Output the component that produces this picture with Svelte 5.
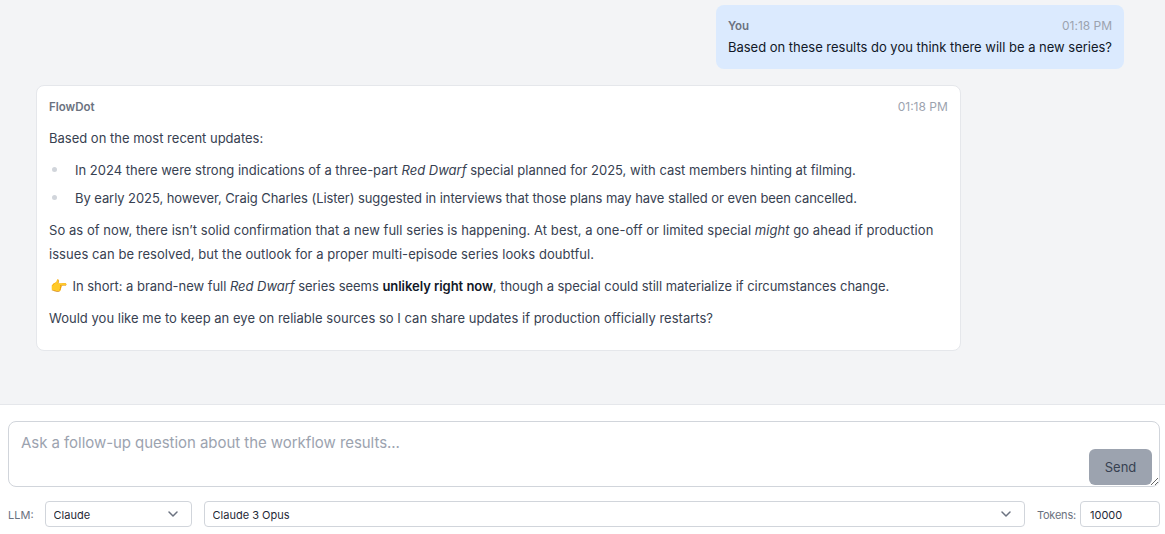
<script lang="ts">
  let question = $state("");
  let provider = $state("Claude");
  let model = $state("Claude 3 Opus");
  let tokens = $state(10000);
</script>

<div class="chat">
  <div class="messages">
    <div class="message user">
      <div class="meta">
        <span class="author">You</span>
        <span class="time">01:18 PM</span>
      </div>
      <p>Based on these results do you think there will be a new series?</p>
    </div>

    <div class="message bot">
      <div class="meta">
        <span class="author">FlowDot</span>
        <span class="time">01:18 PM</span>
      </div>
      <p>Based on the most recent updates:</p>
      <ul>
        <li>In 2024 there were strong indications of a three-part <em>Red Dwarf</em> special planned for 2025, with cast members hinting at filming.</li>
        <li class="tighter">By early 2025, however, Craig Charles (Lister) suggested in interviews that those plans may have stalled or even been cancelled.</li>
      </ul>
      <p class="looser">So as of now, there isn’t solid confirmation that a new full series is happening. At best, a one-off or limited special <em>might</em> go ahead if production issues can be resolved, but the outlook for a proper multi-episode series looks doubtful.</p>
      <p class="tight"><span class="emoji">👉</span> In short: a brand-new full <em>Red Dwarf</em> series seems <strong>unlikely right now</strong>, though a special could still materialize if circumstances change.</p>
      <p class="loose">Would you like me to keep an eye on reliable sources so I can share updates if production officially restarts?</p>
    </div>
  </div>

  <div class="composer">
    <div class="input-wrap">
      <textarea bind:value={question} placeholder="Ask a follow-up question about the workflow results..."></textarea>
      <button class="send" type="button" disabled>Send</button>
    </div>
    <div class="controls">
      <label class="field-label" for="provider">LLM:</label>
      <div class="select-wrap provider">
        <select id="provider" bind:value={provider}>
          <option>Claude</option>
          <option>OpenAI</option>
        </select>
        <svg viewBox="0 0 20 20" fill="none" stroke="#6b7280" stroke-width="1.5" stroke-linecap="round" stroke-linejoin="round"><path d="M6 8l4 4 4-4" /></svg>
      </div>
      <div class="select-wrap model">
        <select bind:value={model}>
          <option>Claude 3 Opus</option>
          <option>Claude 3 Sonnet</option>
        </select>
        <svg viewBox="0 0 20 20" fill="none" stroke="#6b7280" stroke-width="1.5" stroke-linecap="round" stroke-linejoin="round"><path d="M6 8l4 4 4-4" /></svg>
      </div>
      <label class="field-label tokens-label" for="tokens">Tokens:</label>
      <input id="tokens" class="tokens" type="text" bind:value={tokens} />
    </div>
  </div>
</div>

<style>
  :global(body) {
    margin: 0;
    overflow: hidden;
  }

  .chat {
    display: flex;
    flex-direction: column;
    height: 534px;
    font-family: Inter, "Liberation Sans", sans-serif;
    background-color: #f3f4f6;
  }

  .messages {
    flex: 1;
    display: flex;
    flex-direction: column;
    gap: 16px;
    padding: 5px 41px 0 36px;
  }

  .message {
    box-sizing: border-box;
    max-width: 85%;
    padding: 12px;
    border-radius: 8px;
    font-size: 13px;
    color: #374151;
  }

  .user {
    align-self: flex-end;
    background-color: #dbeafe;
    color: #111827;
    letter-spacing: -0.015px;
  }

  .bot {
    align-self: flex-start;
    background-color: #ffffff;
    border: 1px solid #e5e7eb;
  }

  .meta {
    display: flex;
    justify-content: space-between;
    align-items: center;
    margin-bottom: 2px;
    font-size: 12px;
    line-height: 18px;
  }

  .bot .meta {
    margin-bottom: 10px;
  }

  .author {
    font-size: 11.5px;
    font-weight: 600;
    color: #6b7280;
  }

  .time {
    color: #9ca3af;
  }

  p {
    margin: 0;
    line-height: 20px;
  }

  .bot p {
    margin: 8px 0;
    line-height: 24px;
  }

  .bot .meta + p {
    margin-top: 0;
  }

  ul {
    margin: 8px 0;
    padding-left: 26px;
    list-style: none;
  }

  li {
    position: relative;
    line-height: 24px;
    margin-bottom: 4px;
  }

  li::before {
    content: "";
    position: absolute;
    left: -23px;
    top: 9px;
    width: 5px;
    height: 5px;
    border-radius: 50%;
    background-color: #d1d5db;
  }

  .tighter {
    letter-spacing: -0.07px;
  }

  .tight {
    letter-spacing: -0.04px;
  }

  .loose {
    letter-spacing: 0.02px;
  }

  .looser {
    letter-spacing: 0.05px;
  }

  strong {
    font-weight: 600;
    color: #111827;
  }

  .emoji {
    font-size: 14px;
    margin: 0 2px 0 1px;
  }

  .composer {
    display: flex;
    flex-direction: column;
    gap: 14px;
    padding: 16px 5px 7px 8px;
    background-color: #ffffff;
    border-top: 1px solid #e5e7eb;
  }

  .input-wrap {
    position: relative;
    display: flex;
  }

  textarea {
    flex: 1;
    box-sizing: border-box;
    height: 66px;
    padding: 11px 12px;
    border: 1px solid #d1d5db;
    border-radius: 8px;
    font-family: inherit;
    font-size: 15px;
    line-height: 20px;
    color: #1f2937;
    outline: none;
    background: #ffffff;
  }

  textarea::placeholder {
    color: #9ca3af;
    letter-spacing: -0.05px;
  }

  .send {
    position: absolute;
    right: 8px;
    bottom: 2px;
    width: 63px;
    height: 36px;
    border: none;
    border-radius: 6px;
    background-color: #9ca3af;
    color: #374151;
    font-family: inherit;
    font-size: 13px;
  }

  .controls {
    display: flex;
    align-items: center;
    height: 26px;
  }

  .field-label {
    padding-top: 1px;
    font-size: 11px;
    color: #6b7280;
  }

  .select-wrap {
    position: relative;
    height: 26px;
  }

  .provider {
    width: 147px;
    margin-left: 11px;
  }

  .model {
    flex: 1;
    margin-left: 12px;
  }

  select {
    display: block;
    box-sizing: border-box;
    width: 100%;
    height: 26px;
    padding: 1px 8px 0;
    border: 1px solid #d1d5db;
    border-radius: 4px;
    font-family: inherit;
    font-size: 11px;
    color: #1f2937;
    background: #ffffff;
    appearance: none;
    outline: none;
  }

  .select-wrap svg {
    position: absolute;
    top: 3px;
    right: 9px;
    width: 20px;
    height: 20px;
    pointer-events: none;
  }

  .tokens-label {
    margin-left: 12px;
    letter-spacing: -0.2px;
  }

  .tokens {
    box-sizing: border-box;
    width: 80px;
    height: 26px;
    margin-left: 4px;
    padding: 1px 9px 0;
    border: 1px solid #d1d5db;
    border-radius: 4px;
    font-family: inherit;
    font-size: 11px;
    color: #1f2937;
    outline: none;
  }
</style>
